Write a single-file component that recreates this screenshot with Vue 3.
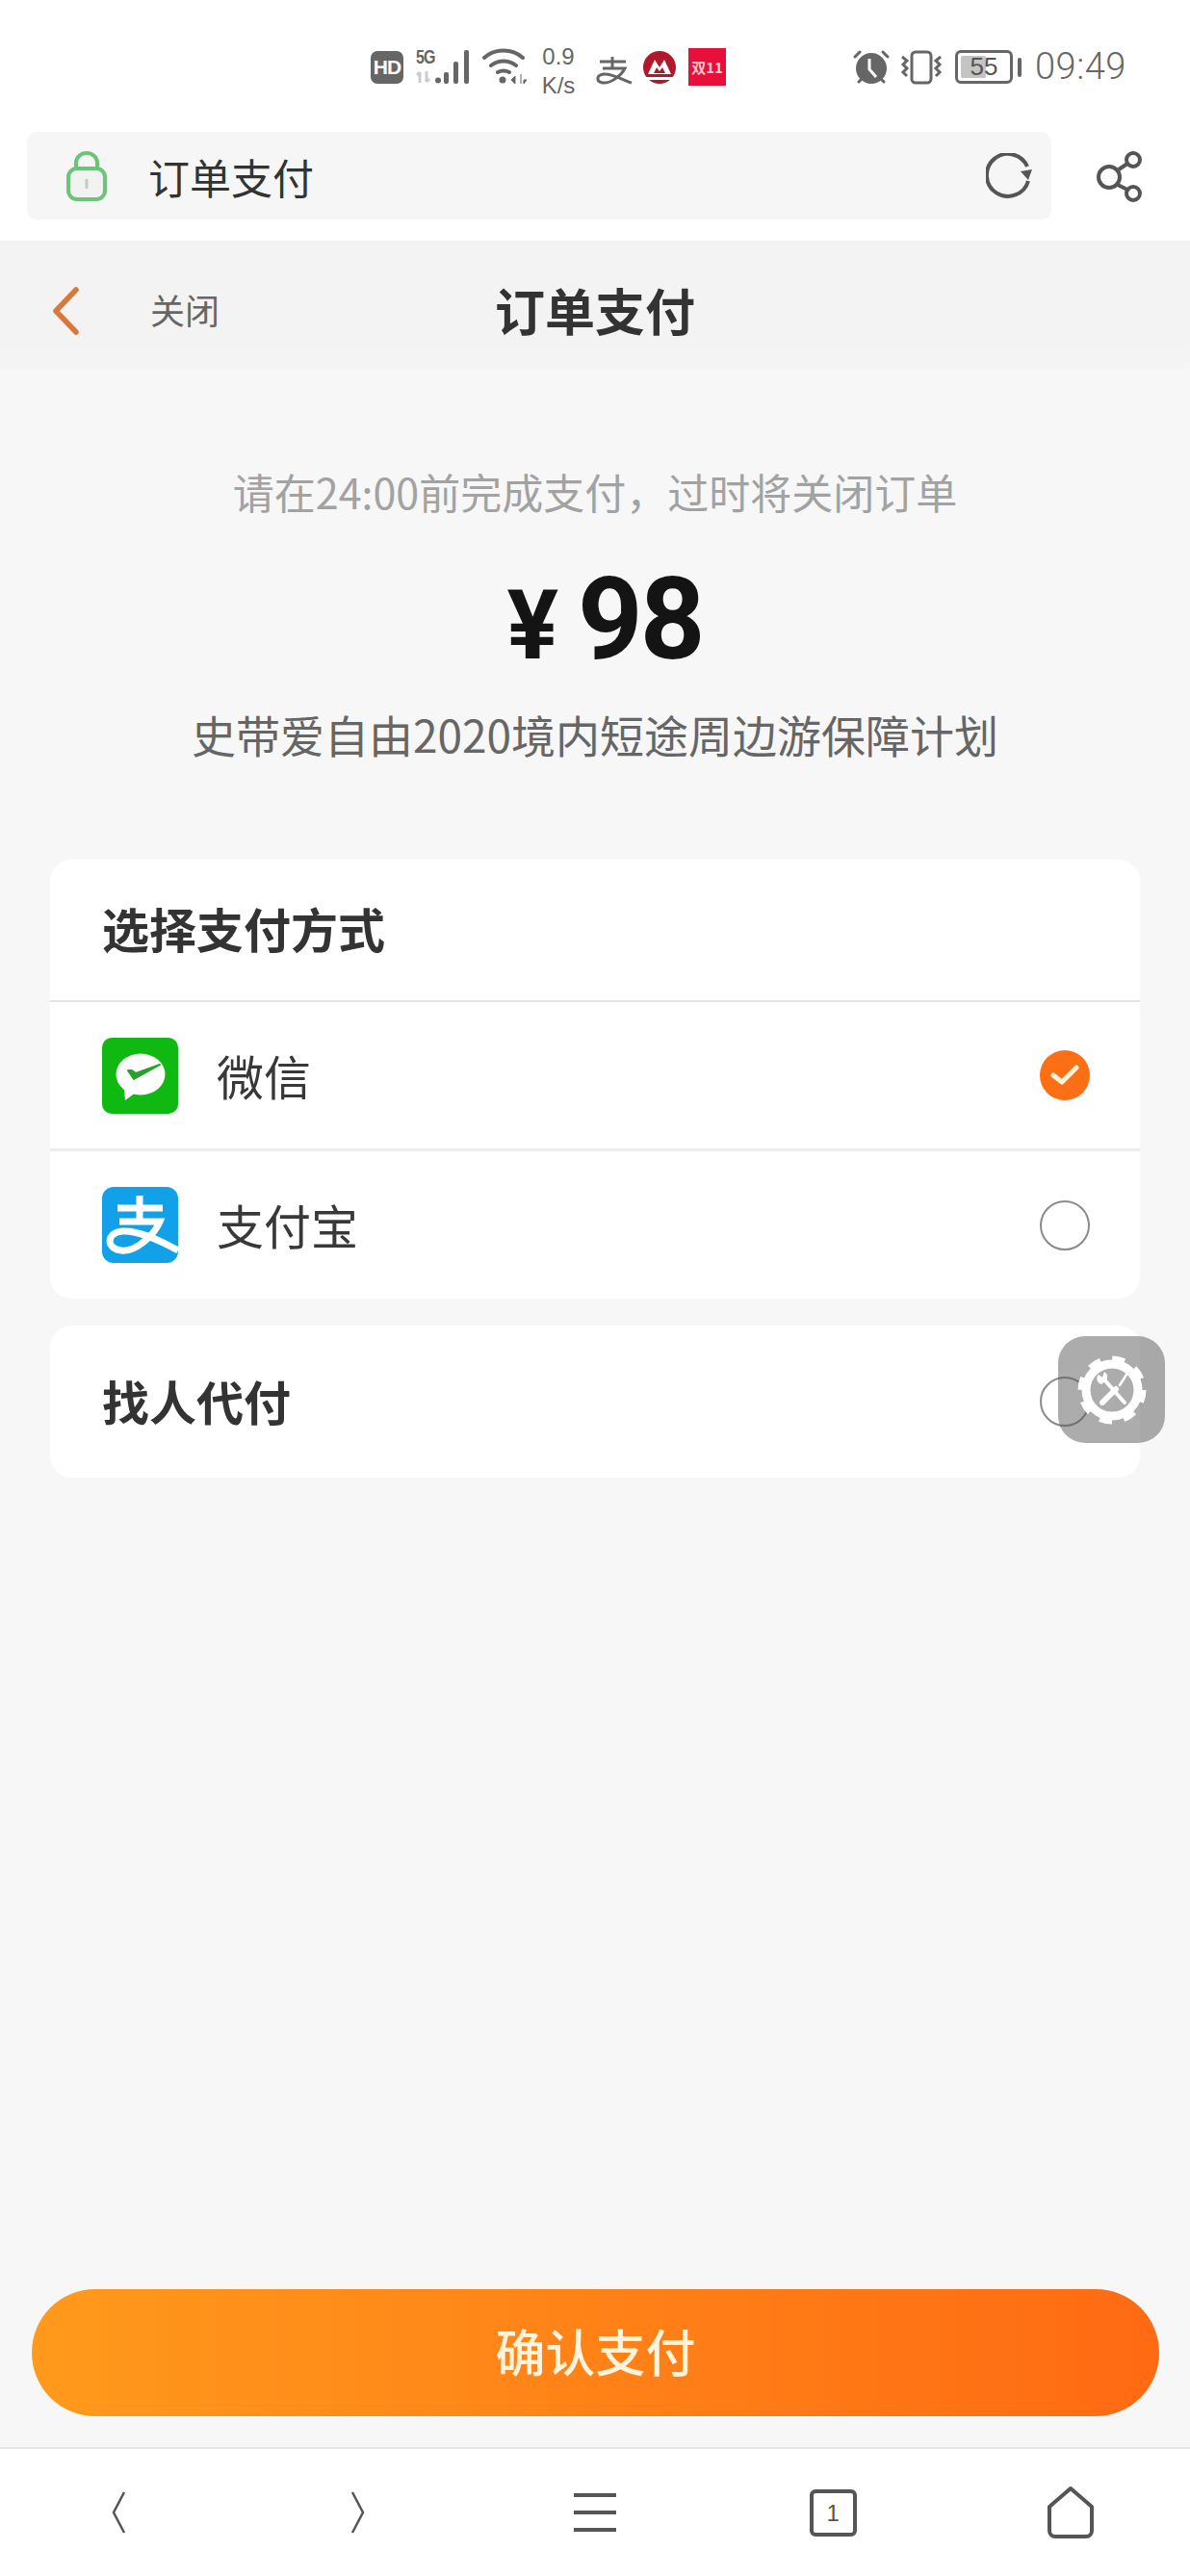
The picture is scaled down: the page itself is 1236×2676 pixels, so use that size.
<template>
  <div class="page">
    <header class="browser">
      <div class="status">
        <span class="status__hd">HD</span>
        <div class="status__signal">
          <div class="status__net">
            <span class="status__5g">5G</span>
            <svg width="15" height="14" viewBox="0 0 15 14"><path d="M4 13V2M1 5l3-3M11 1v11M14 9l-3 3" fill="none" stroke="#ccc" stroke-width="3" /></svg>
          </div>
          <svg class="status__bars" width="38" height="36" viewBox="0 0 38 36">
            <circle cx="3" cy="32.500" r="3" fill="#666" />
            <rect x="9" y="24" width="5" height="12" rx="2" fill="#666" />
            <rect x="19" y="13" width="5" height="23" rx="2" fill="#666" />
            <rect x="30" y="1" width="5" height="35" rx="2" fill="#666" />
          </svg>
        </div>
        <svg class="status__wifi" width="46" height="38" viewBox="0 0 46 38">
          <path d="M2 10C13 0 31 0 42 10M9 18c8-6 18-6 26 0M16 25c4-2 8-2 12 0" fill="none" stroke="#666" stroke-width="4" stroke-linecap="round" />
          <circle cx="21" cy="33" r="3.500" fill="#666" />
          <path d="M30 33l4-4v8zM40 27v10M43 33h3l-3 4z" fill="#666" stroke="#666" stroke-width="1" />
        </svg>
        <div class="status__speed"><span>0.9</span><span>K/s</span></div>
        <svg class="status__ali" width="38" height="30" viewBox="0 0 38 30">
          <path d="M4 6h27M17 1v12M7 13h23C26 21 15 29 7 28 0 27 0 20 8 19c8-1 20 6 29 9" fill="none" stroke="#666" stroke-width="3" />
        </svg>
        <svg class="status__cmb" width="34" height="34" viewBox="0 0 34 34">
          <circle cx="17" cy="17" r="17" fill="#b2182b" />
          <path d="M5 24L12 9l5 8 5-8 7 15zM2 27h30v3H2z" fill="#fff" />
          <path d="M11 23l3-6 3 4 3-4 3 6z" fill="#b2182b" />
        </svg>
        <span class="status__promo">双11</span>
        <svg class="status__alarm" width="40" height="36" viewBox="0 0 40 36">
          <path d="M3 7l5-5M37 7l-5-5M7 33l3-3M33 33l-3-3" stroke="#666" stroke-width="3" stroke-linecap="round" />
          <circle cx="20" cy="19" r="16" fill="#666" />
          <path d="M18 9v11l7 8" fill="none" stroke="#fff" stroke-width="3" />
        </svg>
        <svg class="status__vibrate" width="44" height="36" viewBox="0 0 44 36">
          <rect x="12" y="2" width="20" height="32" rx="4" fill="none" stroke="#666" stroke-width="3" />
          <path d="M2 7l5 4-4 4 4 4-4 4 4 4M42 7l-5 4 4 4-4 4 4 4-4 4" fill="none" stroke="#666" stroke-width="3" />
        </svg>
        <div class="status__battery">
          <div class="status__cell">
            <div class="status__fill" :style="{ width: battery + '%' }" />
            <span class="status__level">{{ battery }}</span>
          </div>
          <span class="status__nub" />
        </div>
        <span class="status__time">09:49</span>
      </div>

      <div class="address">
        <div class="address__bar">
          <svg class="address__lock" width="44" height="52" viewBox="0 0 44 52">
            <path d="M11 20v-8a11 10 0 0 1 22 0v8" fill="none" stroke="#6cc576" stroke-width="4" />
            <rect x="3" y="18" width="38" height="32" rx="9" fill="#f2f2f2" stroke="#6cc576" stroke-width="4" />
            <rect x="20.500" y="29" width="3" height="10" fill="#bfcfc2" />
          </svg>
          <span class="address__title">订单支付</span>
          <svg class="address__reload" width="50" height="48" viewBox="0 0 50 48">
            <path d="M44 29A22 22 0 1 1 43 14" fill="none" stroke="#555" stroke-width="4" />
            <path d="M36 19l12-2-4 11z" fill="#555" />
          </svg>
        </div>
        <svg class="address__share" width="52" height="56" viewBox="0 0 52 56">
          <circle cx="15" cy="29" r="11" fill="none" stroke="#555" stroke-width="4" />
          <circle cx="40" cy="11" r="7" fill="none" stroke="#555" stroke-width="4" />
          <circle cx="40" cy="46" r="7" fill="none" stroke="#555" stroke-width="4" />
          <path d="M25 21l9-6M24 37l10 5" stroke="#555" stroke-width="4" />
        </svg>
      </div>
    </header>

    <main class="content">
      <div class="nav">
        <svg class="nav__back" width="28" height="50" viewBox="0 0 28 50">
          <path d="M25 3L4 25l21 22" fill="none" stroke="#d9783a" stroke-width="5.500" stroke-linecap="round" stroke-linejoin="round" />
        </svg>
        <span class="nav__close">关闭</span>
        <h1 class="nav__title">订单支付</h1>
      </div>

      <section class="summary">
        <p class="summary__notice">请在24:00前完成支付，过时将关闭订单</p>
        <div class="summary__amount"><span class="summary__yen">¥</span><span class="summary__num">98</span></div>
        <p class="summary__name">史带爱自由2020境内短途周边游保障计划</p>
      </section>

      <section class="card">
        <h2 class="card__title">选择支付方式</h2>
        <div v-for="item in methods" :key="item.id" class="method" @click="selected = item.id">
          <svg v-if="item.id === 'wechat'" class="method__icon" width="79" height="79" viewBox="0 0 79 79">
            <rect width="79" height="79" rx="10" fill="#10b812" />
            <ellipse cx="40" cy="38" rx="25.500" ry="21.500" fill="#fff" />
            <path d="M23 54l1 11 11-8z" fill="#fff" />
            <path d="M27 34l6 9 27-15-25 9-4-3z" fill="#27a12c" stroke="#27a12c" stroke-width="2" stroke-linejoin="round" />
          </svg>
          <svg v-else class="method__icon" width="79" height="79" viewBox="0 0 79 79">
            <rect width="79" height="79" rx="12" fill="#11a1e8" />
            <path d="M16 22h47M39 9v26M18 36h42C54 50 35 68 20 66 3 64 5 47 21 46c17-1 38 9 58 20" fill="none" stroke="#fff" stroke-width="7" />
          </svg>
          <span class="method__label">{{ item.label }}</span>
          <span class="radio" :class="{ 'radio--on': selected === item.id }">
            <svg v-if="selected === item.id" width="30" height="24" viewBox="0 0 30 24">
              <path d="M3 12l9 7L27 4" fill="none" stroke="#fff3df" stroke-width="5" stroke-linecap="round" stroke-linejoin="round" />
            </svg>
          </span>
        </div>
      </section>

      <section class="card card--single">
        <h2 class="card__heading">找人代付</h2>
        <span class="radio" />
        <div class="tool">
          <svg width="72" height="72" viewBox="0 0 72 72">
            <circle cx="36" cy="36" r="27" fill="none" stroke="#fff" stroke-width="9" />
            <circle cx="36" cy="36" r="32.500" fill="none" stroke="#fff" stroke-width="6" stroke-dasharray="13 12.530" />
            <path d="M27 24l22 25" stroke="#fff" stroke-width="4" stroke-linecap="round" />
            <path d="M22 20a6 6 0 0 0 3 10l5-4a6 6 0 0 0-2-9l-2 6z" fill="#fff" />
            <path d="M51 20l-7 11" stroke="#fff" stroke-width="2.500" stroke-linecap="round" />
            <path d="M40 35L26 49" stroke="#fff" stroke-width="6" stroke-linecap="round" />
          </svg>
        </div>
      </section>

      <button class="confirm" type="button">确认支付</button>
    </main>

    <footer class="toolbar">
      <div class="toolbar__cell">
        <svg width="18" height="44" viewBox="0 0 18 44"><path d="M14 1L3 22l11 21" fill="none" stroke="#555" stroke-width="2.500" /></svg>
      </div>
      <div class="toolbar__cell">
        <svg width="18" height="44" viewBox="0 0 18 44"><path d="M4 1l11 21L4 43" fill="none" stroke="#555" stroke-width="2.500" /></svg>
      </div>
      <div class="toolbar__cell">
        <svg width="44" height="44" viewBox="0 0 44 44"><path d="M0 4h44M0 22h44M0 40h44" stroke="#555" stroke-width="4" /></svg>
      </div>
      <div class="toolbar__cell">
        <div class="toolbar__tab">1</div>
      </div>
      <div class="toolbar__cell">
        <svg width="52" height="54" viewBox="0 0 52 54">
          <path d="M26 2l22 19v25a6 6 0 0 1-6 6H10a6 6 0 0 1-6-6V21z" fill="none" stroke="#555" stroke-width="4" stroke-linejoin="round" />
        </svg>
      </div>
    </footer>
  </div>
</template>

<script setup>
import { ref } from 'vue';

const battery = 55;
const selected = ref('wechat');

const methods = [
  { id: 'wechat', label: '微信' },
  { id: 'alipay', label: '支付宝' }
];
</script>

<style scoped>
.page {
  width: 1236px;
  height: 2676px;
  display: flex;
  flex-direction: column;
  background: #fff;
  color: #333;
  font-family: "Noto Sans CJK SC", "Liberation Sans", sans-serif;
  overflow: hidden;
}

.browser {
  height: 250px;
  flex-shrink: 0;
}

.status {
  height: 137px;
  box-sizing: border-box;
  padding: 50px 0 0 385px;
  display: flex;
  align-items: flex-start;
  color: #666;
}

.status__hd {
  width: 34px;
  height: 34px;
  margin-top: 3px;
  border-radius: 7px;
  background: #666;
  color: #fff;
  font: 700 21px/34px "Liberation Sans", sans-serif;
  letter-spacing: -1px;
  text-align: center;
}

.status__signal {
  display: flex;
  align-items: flex-end;
  margin-left: 13px;
  height: 37px;
}

.status__net {
  width: 20px;
  display: flex;
  flex-direction: column;
  justify-content: space-between;
  height: 37px;
}

.status__5g {
  font: 700 16px/16px "Liberation Sans", sans-serif;
  letter-spacing: -1px;
  transform: scaleY(1.25);
  transform-origin: top left;
}

.status__wifi {
  margin-left: 11px;
}

.status__speed {
  display: flex;
  flex-direction: column;
  width: 42px;
  margin: -6px 0 0 12px;
  font: 24px/30px "Liberation Sans", sans-serif;
  text-align: center;
}

.status__ali {
  margin: 8px 0 0 18px;
}

.status__cmb {
  margin: 3px 0 0 11px;
}

.status__promo {
  width: 39px;
  height: 39px;
  margin-left: 13px;
  background: #e8103a;
  color: #fcc;
  font: 700 15px/39px "Noto Sans CJK SC", sans-serif;
  text-align: center;
}

.status__alarm {
  margin: 2px 0 0 131px;
}

.status__vibrate {
  margin: 2px 0 0 10px;
}

.status__battery {
  display: flex;
  align-items: center;
  margin: 2px 0 0 13px;
}

.status__cell {
  position: relative;
  width: 60px;
  height: 35px;
  box-sizing: border-box;
  border: 3px solid #666;
  border-radius: 6px;
  padding: 3px;
  display: flex;
}

.status__fill {
  background: #c4c4c4;
  border-radius: 2px;
}

.status__level {
  position: absolute;
  inset: 0;
  font: 26px/29px "Liberation Sans", sans-serif;
  text-align: center;
  color: #555;
}

.status__nub {
  width: 4px;
  height: 20px;
  margin-left: 5px;
  background: #666;
  border-radius: 2px;
}

.status__time {
  margin: -3px 0 0 14px;
  font: 300 38px/44px "Roboto", "Liberation Sans", sans-serif;
  letter-spacing: 0.5px;
}

.address {
  display: flex;
  align-items: center;
  height: 91px;
  margin-left: 28px;
}

.address__bar {
  width: 1064px;
  height: 91px;
  flex-shrink: 0;
  box-sizing: border-box;
  padding: 0 18px 0 40px;
  display: flex;
  align-items: center;
  background: #f6f6f6;
  border-radius: 10px;
}

.address__title {
  margin-left: 42px;
  font-size: 43px;
  line-height: 60px;
  color: #333;
}

.address__reload {
  margin-left: auto;
}

.address__share {
  margin-left: 45px;
}

.content {
  position: relative;
  flex: 1;
  display: flex;
  flex-direction: column;
  background: #f7f7f7;
  border-bottom: 2px solid #e6e6e6;
}

.nav {
  position: relative;
  height: 146px;
  flex-shrink: 0;
  display: flex;
  align-items: center;
  padding-left: 54px;
  background: linear-gradient(#f3f3f3 75%, #f7f7f7);
}

.nav__close {
  margin: 0 0 4px 74px;
  font-size: 36px;
  color: #666;
}

.nav__title {
  position: absolute;
  left: 0;
  right: 0;
  margin: 0 0 4px;
  font-size: 52px;
  font-weight: 700;
  text-align: center;
  color: #333;
}

.summary {
  padding-top: 84px;
  text-align: center;
}

.summary__notice {
  margin: 0;
  font-size: 43px;
  line-height: 60px;
  color: #a2a2a2;
}

.summary__amount {
  display: flex;
  justify-content: center;
  align-items: baseline;
  height: 140px;
  margin-top: 34px;
  padding-left: 20px;
  color: #141414;
  line-height: 140px;
  font-family: "Roboto", "Liberation Sans", sans-serif;
  font-weight: 700;
}

.summary__yen {
  font-size: 100px;
  margin-right: 20px;
}

.summary__num {
  font-size: 118px;
  letter-spacing: -3px;
}

.summary__name {
  margin: 18px 0 0;
  font-size: 46px;
  line-height: 60px;
  color: #666;
}

.card {
  margin: 101px 52px 0;
  background: #fff;
  border-radius: 22px;
  overflow: hidden;
}

.card__title,
.card__heading {
  margin: 0;
  font-size: 49px;
  font-weight: 700;
  color: #333;
}

.card__title {
  height: 148px;
  box-sizing: border-box;
  padding: 0 0 3px 54px;
  line-height: 142px;
  border-bottom: 2px solid #e4e4e4;
}

.method {
  display: flex;
  align-items: center;
  height: 152px;
  padding: 0 52px 0 54px;
  cursor: pointer;
}

.method + .method {
  height: 153px;
  border-top: 3px solid #ececec;
}

.method__label {
  margin: 0 0 2px 40px;
  font-size: 49px;
  color: #383838;
}

.radio {
  width: 52px;
  height: 52px;
  margin-left: auto;
  box-sizing: border-box;
  display: flex;
  align-items: center;
  justify-content: center;
  border: 2px solid #8a8a8a;
  border-radius: 50%;
  flex-shrink: 0;
}

.radio--on {
  background: #fd6f14;
  border: 0;
}

.card--single {
  position: relative;
  display: flex;
  align-items: center;
  height: 158px;
  margin-top: 28px;
  padding: 0 52px 0 54px;
  overflow: visible;
}

.card__heading {
  margin-bottom: 4px;
}

.tool {
  position: absolute;
  left: 1047px;
  top: 11px;
  width: 111px;
  height: 111px;
  display: flex;
  align-items: center;
  justify-content: center;
  background: rgba(90, 90, 90, 0.5);
  border-radius: 28px;
}

.confirm {
  margin: auto 32px 32px 33px;
  height: 132px;
  flex-shrink: 0;
  border: 0;
  border-radius: 66px;
  background: linear-gradient(90deg, #ff9a1c, #ff6a13);
  color: #fff3dc;
  font-family: inherit;
  font-size: 52px;
  font-weight: 500;
  line-height: 128px;
  padding: 0 0 4px;
}

.toolbar {
  height: 132px;
  flex-shrink: 0;
  display: grid;
  grid-template-columns: repeat(5, 1fr);
  background: #fff;
}

.toolbar__cell {
  display: flex;
  align-items: center;
  justify-content: center;
}

.toolbar__tab {
  width: 49px;
  height: 49px;
  box-sizing: border-box;
  border: 4px solid #555;
  border-radius: 6px;
  font: 24px/41px "Liberation Sans", sans-serif;
  text-align: center;
  color: #555;
}
</style>
